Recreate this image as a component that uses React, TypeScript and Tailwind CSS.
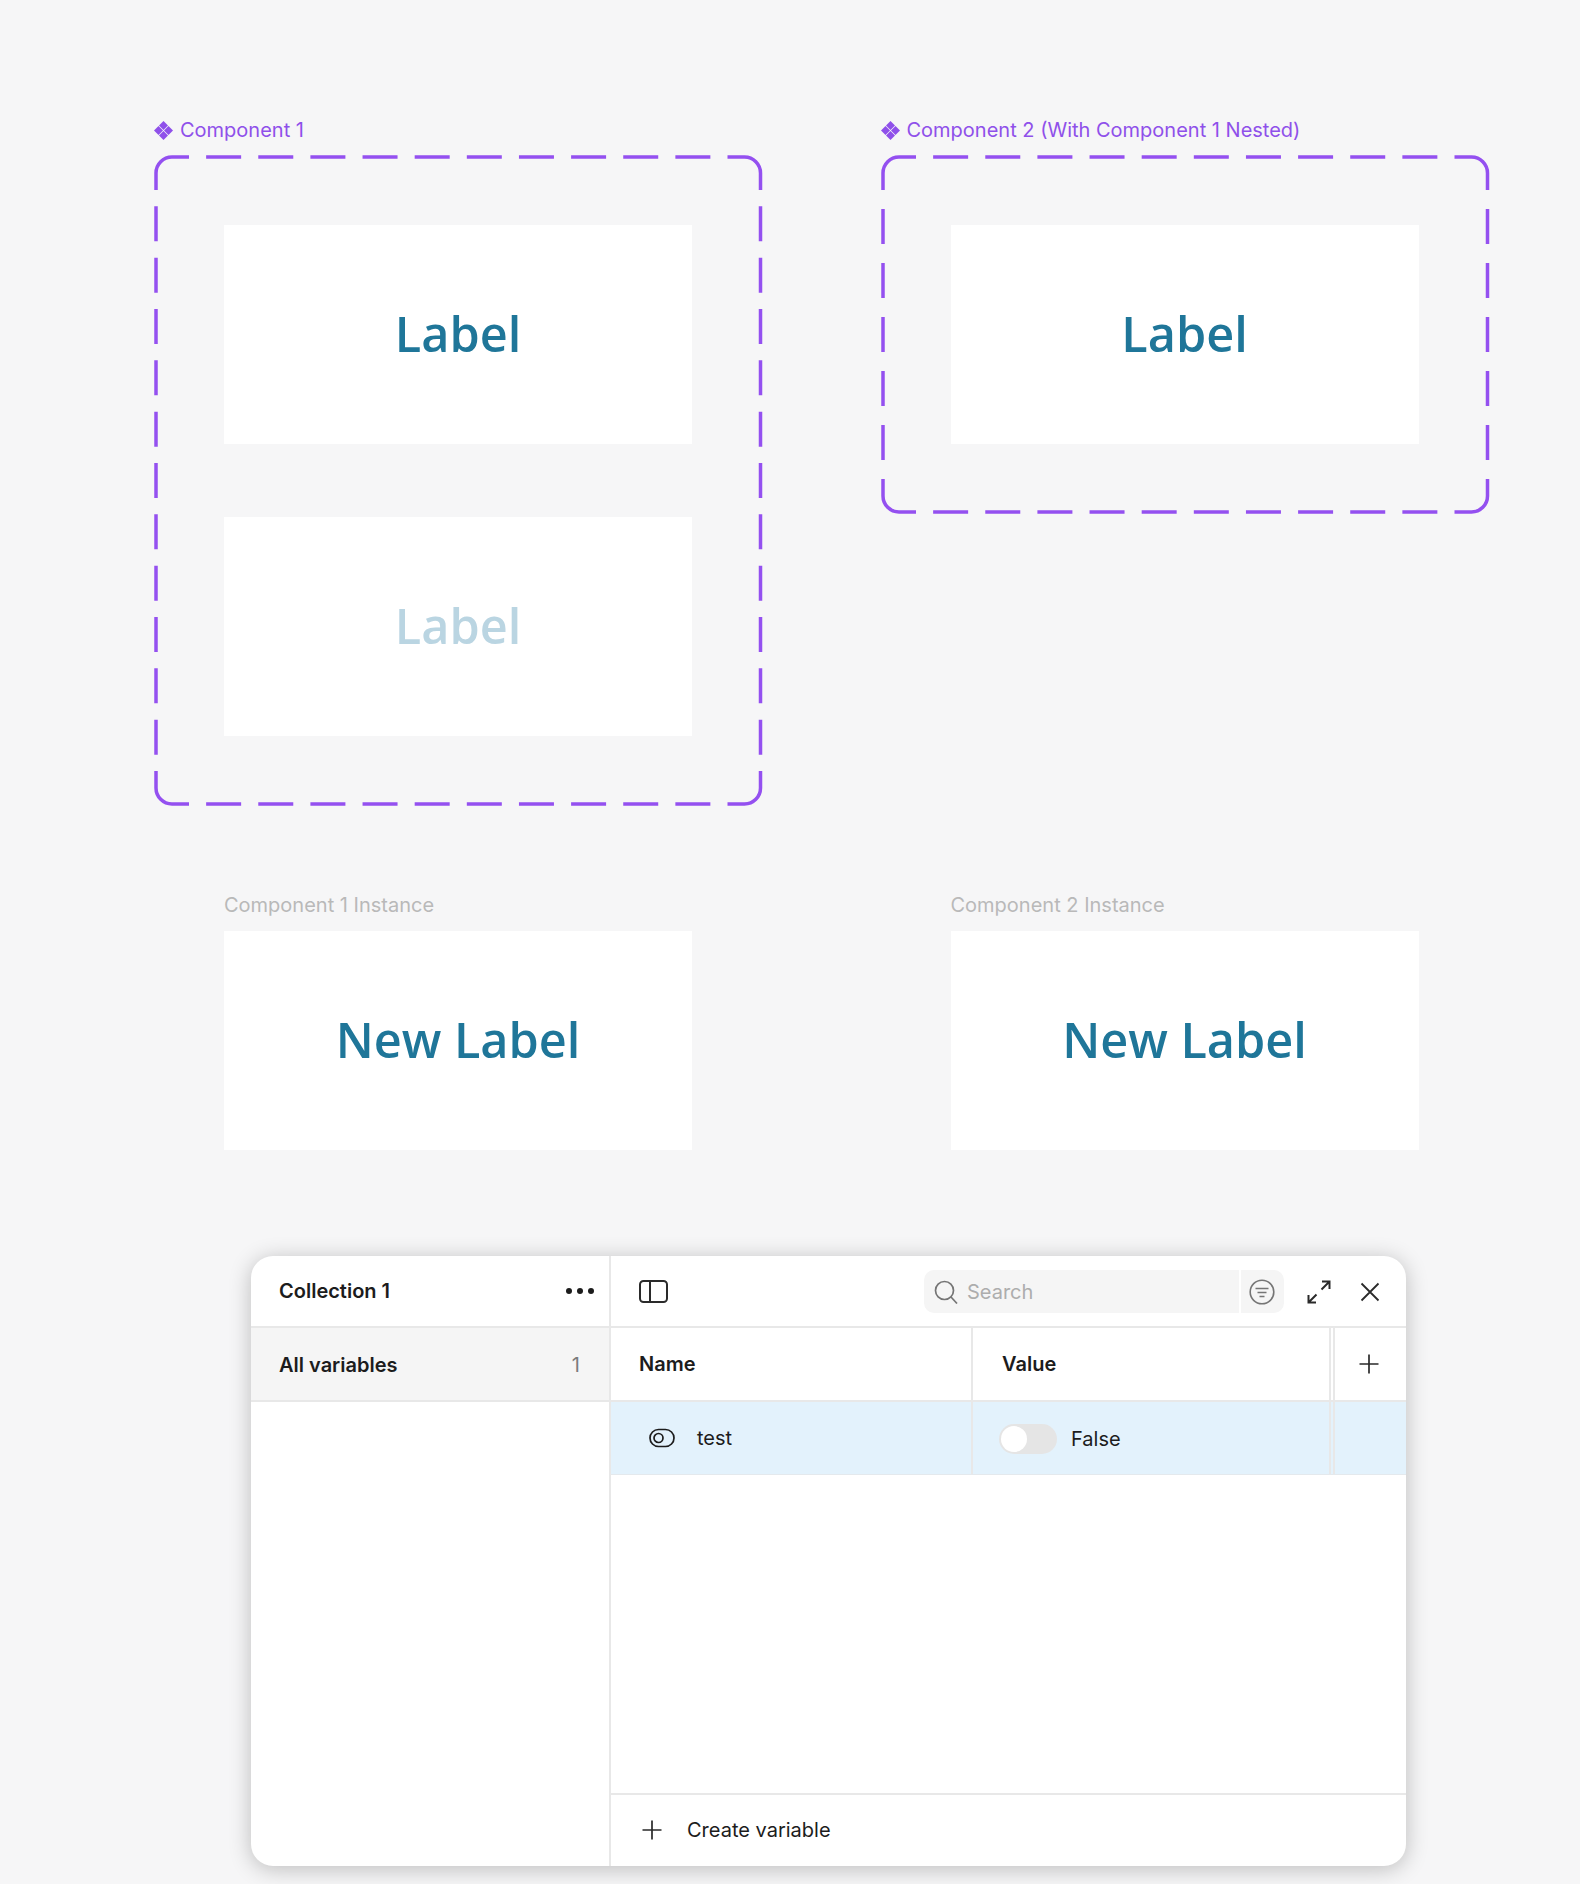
import { ReactNode } from "react";

// dash pattern of the component frames, one run per side so the corners stay symmetric
const sidePath = (
  x: number,
  y: number,
  dx: number,
  dy: number,
  length: number,
  dashes: number,
) => {
  const dash = 35;
  const gap = (length - dashes * dash) / (dashes + 1);
  let d = "";
  for (let i = 0; i < dashes; i++) {
    const start = gap + i * (dash + gap);
    const end = start + dash;
    d += `M${x + dx * start} ${y + dy * start}L${x + dx * end} ${y + dy * end}`;
  }
  return d;
};

const framePath = (w: number, h: number) => {
  const l = 2;
  const t = 2;
  const r = l + w;
  const b = t + h;
  const c = 33;
  const rad = 16;
  const corners =
    `M${l} ${t + c}V${t + rad}A${rad} ${rad} 0 0 1 ${l + rad} ${t}H${l + c}` +
    `M${r - c} ${t}H${r - rad}A${rad} ${rad} 0 0 1 ${r} ${t + rad}V${t + c}` +
    `M${r} ${b - c}V${b - rad}A${rad} ${rad} 0 0 1 ${r - rad} ${b}H${r - c}` +
    `M${l + c} ${b}H${l + rad}A${rad} ${rad} 0 0 1 ${l} ${b - rad}V${b - c}`;
  const hd = 10;
  const vd = Math.round((h - 2 * c - 17) / 52);
  return (
    corners +
    sidePath(l + c, t, 1, 0, w - 2 * c, hd) +
    sidePath(l + c, b, 1, 0, w - 2 * c, hd) +
    sidePath(l, t + c, 0, 1, h - 2 * c, vd) +
    sidePath(r, t + c, 0, 1, h - 2 * c, vd)
  );
};

const Diamonds = () => (
  <svg width="19" height="19" viewBox="0 0 19 19" fill="#8f50ea">
    <path d="M9.5 0L14 4.5L9.5 9L5 4.5Z" />
    <path d="M9.5 10L14 14.5L9.5 19L5 14.5Z" />
    <path d="M4.5 5L9 9.5L4.5 14L0 9.5Z" />
    <path d="M14.5 5L19 9.5L14.5 14L10 9.5Z" />
  </svg>
);

const FrameTitle = ({ children }: { children: ReactNode }) => (
  <div className="flex items-center gap-[7px] h-6 mb-[13px] text-[20px] text-[#8f50ea]">
    <Diamonds />
    <span>{children}</span>
  </div>
);

const Frame = ({ height, children }: { height: number; children: ReactNode }) => (
  <div
    className="relative w-[608px] p-[70px] flex flex-col gap-[73px]"
    style={{ height: height + 4 }}
  >
    <svg
      className="absolute left-0 top-0"
      width="609"
      height={height + 4}
      fill="none"
      stroke="#9450f0"
      strokeWidth="3.5"
    >
      <path d={framePath(604.5, height)} />
    </svg>
    {children}
  </div>
);

const LabelCard = ({ text, faded }: { text: string; faded?: boolean }) => (
  <div
    className={`w-[468px] h-[219px] pb-[2px] bg-white flex items-center justify-center font-['Open_Sans',sans-serif] font-semibold text-[48.6px] ${
      faded ? "text-[#bad5e2]" : "text-[#1f7699]"
    }`}
  >
    {text}
  </div>
);

const Instance = ({ title }: { title: string }) => (
  <div>
    <div className="h-6 mb-[14px] text-[20px] leading-6 text-[#b9b9b9]">{title}</div>
    <LabelCard text="New Label" />
  </div>
);

const Plus = () => (
  <svg width="20" height="20" viewBox="0 0 20 20" stroke="#2a2a2a" strokeWidth="1.7">
    <path d="M10 0.5V19.5M0.5 10H19.5" />
  </svg>
);

const VariablesPanel = () => (
  <div className="ml-[251px] mt-[106px] w-[1155px] h-[610px] bg-white rounded-[22px] shadow-[0_3px_22px_rgba(0,0,0,0.24)] flex overflow-hidden text-[20px] text-[#1c1c1c]">
    <div className="w-[360px] shrink-0 border-r-2 border-[#e8e8e8] flex flex-col">
      <div className="h-[72px] shrink-0 border-b-2 border-[#e8e8e8] pl-[28px] pr-[15px] flex items-center justify-between font-semibold">
        <span>Collection 1</span>
        <div className="flex gap-[5px]">
          <span className="w-[6px] h-[6px] rounded-full bg-[#1c1c1c]" />
          <span className="w-[6px] h-[6px] rounded-full bg-[#1c1c1c]" />
          <span className="w-[6px] h-[6px] rounded-full bg-[#1c1c1c]" />
        </div>
      </div>
      <div className="h-[74px] shrink-0 border-b-2 border-[#e8e8e8] bg-[#f5f5f5] pl-[28px] pr-[29px] pt-[1px] flex items-center justify-between">
        <span className="font-semibold">All variables</span>
        <span className="text-[#7b7b7b]">1</span>
      </div>
    </div>

    <div className="flex-1 flex flex-col">
      <div className="h-[72px] shrink-0 border-b-2 border-[#e8e8e8] flex items-center pl-[28px] pt-[1px]">
        <svg width="29" height="23" viewBox="0 0 29 23" fill="none" stroke="#2a2a2a" strokeWidth="2">
          <rect x="1" y="1" width="27" height="21" rx="3.5" />
          <path d="M11 1V22" />
        </svg>
        <div className="ml-[256px] w-[360px] h-[43px] rounded-[10px] bg-[#f5f5f5] flex items-center">
          <div className="flex-1 flex items-center gap-[9px] pl-[10px] border-r-2 border-white h-full">
            <svg width="24" height="24" viewBox="0 0 24 24" fill="none" stroke="#757575" strokeWidth="1.7">
              <circle cx="10.5" cy="10.5" r="9" />
              <path d="M17 17L23 23.5" />
            </svg>
            <span className="text-[#adadad]">Search</span>
          </div>
          <div className="w-[43px] flex justify-center pr-[1px]">
            <svg width="26" height="26" viewBox="0 0 26 26" fill="none" stroke="#757575" strokeWidth="1.6">
              <circle cx="13" cy="13" r="11.8" />
              <path d="M6.5 9.5H19.5M8.5 13.5H17.5M10.5 17.5H15.5" />
            </svg>
          </div>
        </div>
        <svg className="ml-[23px]" width="24" height="24" viewBox="0 0 24 24" fill="none" stroke="#2a2a2a" strokeWidth="2">
          <path d="M14.5 9.5L22.5 1.5M15 1.5H22.5V9M9.5 14.5L1.5 22.5M1.5 15V22.5H9" />
        </svg>
        <svg className="ml-[29px]" width="20" height="20" viewBox="0 0 20 20" stroke="#2a2a2a" strokeWidth="1.8">
          <path d="M1.5 1.5L18.5 18.5M18.5 1.5L1.5 18.5" />
        </svg>
      </div>

      <div className="h-[74px] shrink-0 border-b-2 border-[#e8e8e8] grid grid-cols-[362px_358px_1fr] font-semibold">
        <div className="border-r-2 border-[#e8e8e8] pl-[28px] flex items-center">Name</div>
        <div className="border-r-2 border-[#e8e8e8] pl-[29px] flex items-center">Value</div>
        <div className="ml-[2px] border-l-2 border-[#e8e8e8] pr-[3px] flex items-center justify-center">
          <Plus />
        </div>
      </div>

      <div className="h-[73px] shrink-0 border-b border-[#e4e9ed] bg-[#e3f2fc] grid grid-cols-[362px_358px_1fr]">
        <div className="border-r-2 border-[#e8e8e8] pl-[38px] flex items-center gap-[22px]">
          <svg width="26" height="20" viewBox="0 0 26 20" fill="none" stroke="#1c1c1c" strokeWidth="1.7">
            <rect x="1" y="1.5" width="24" height="17" rx="8.5" />
            <circle cx="9.5" cy="10" r="4.5" />
          </svg>
          <span>test</span>
        </div>
        <div className="border-r-2 border-[#e8e8e8] pl-[26px] pt-[1px] flex items-center gap-[14px]">
          <div className="w-[58px] h-[30px] rounded-full bg-[#e5e5e5] flex items-center pl-[2px]">
            <span className="w-[26px] h-[26px] rounded-full bg-white" />
          </div>
          <span>False</span>
        </div>
        <div className="ml-[2px] border-l-2 border-[#e8e8e8]" />
      </div>

      <div className="flex-1" />

      <div className="h-[73px] shrink-0 border-t-2 border-[#e8e8e8] pl-[31px] pb-[1px] flex items-center gap-[25px]">
        <Plus />
        <span>Create variable</span>
      </div>
    </div>
  </div>
);

export default function App() {
  return (
    <div className="w-[1580px] h-[1884px] overflow-hidden bg-[#f6f6f7] pt-[118px] font-['Inter',sans-serif]">
      <div className="flex items-start pl-[154px] gap-[118.5px]">
        <div>
          <FrameTitle>Component 1</FrameTitle>
          <Frame height={647}>
            <LabelCard text="Label" />
            <LabelCard text="Label" faded />
          </Frame>
        </div>
        <div>
          <FrameTitle>Component 2 (With Component 1 Nested)</FrameTitle>
          <Frame height={355}>
            <LabelCard text="Label" />
          </Frame>
        </div>
      </div>

      <div className="flex pl-[224px] gap-[258.5px] mt-[87px]">
        <Instance title="Component 1 Instance" />
        <Instance title="Component 2 Instance" />
      </div>

      <VariablesPanel />
    </div>
  );
}
